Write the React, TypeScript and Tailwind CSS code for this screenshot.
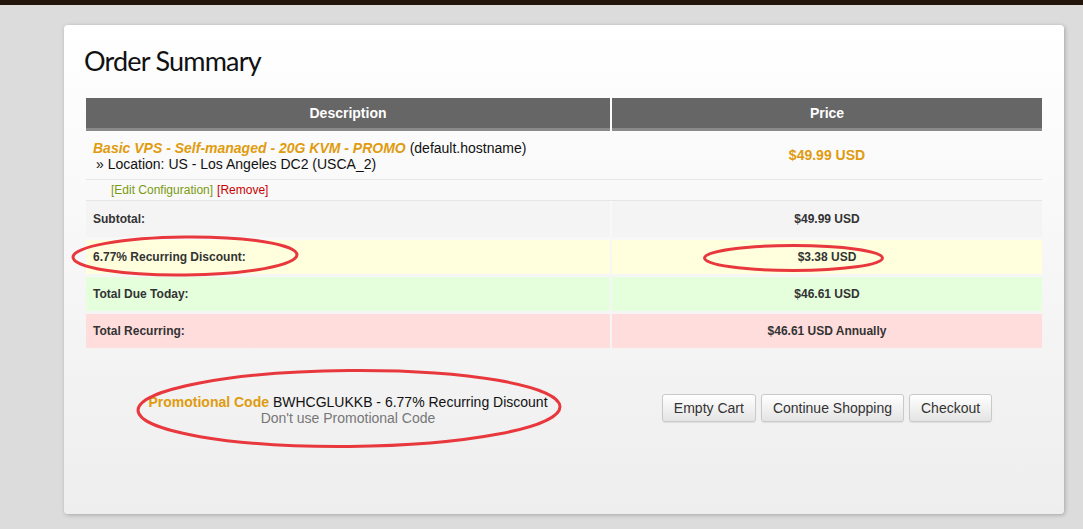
export default function App() {
  const arial = { fontFamily: '"Liberation Sans", Arial, sans-serif' }
  const summary = [
    { label: 'Subtotal:', value: '$49.99 USD', bg: 'bg-[#f4f4f4]', h: 'h-[36px]' },
    { label: '6.77% Recurring Discount:', value: '$3.38 USD', bg: 'bg-[#ffffdd]', h: 'h-[34px]' },
    { label: 'Total Due Today:', value: '$46.61 USD', bg: 'bg-[#e5ffdd]', h: 'h-[34px]' },
    { label: 'Total Recurring:', value: '$46.61 USD Annually', bg: 'bg-[#ffdddd]', h: 'h-[34px]' },
  ]

  return (
    <div className="relative w-[1083px] h-[529px] overflow-hidden bg-[#dcdcdc]" style={arial}>
      <div className="h-[5px] bg-[#231509]" />

      {/* Card */}
      <div className="ml-[64px] mt-[20px] w-[1000px] h-[489px] rounded-[4px] bg-gradient-to-b from-white to-[#eeeeee] shadow-[1px_1px_4px_rgba(0,0,0,0.25)] pt-[19px] px-[22px]">
        <h1
          className="ml-[-2px] text-[27px] leading-[34px] tracking-[-0.8px] text-[#111]"
          style={{ fontFamily: 'Lato, sans-serif' }}
        >
          Order Summary
        </h1>

        {/* Table */}
        <div className="mt-[20px] w-[956px]">
          <div className="grid grid-cols-[524px_430px] gap-x-[2px] text-[14px] font-bold text-white">
            <div className="h-[33px] bg-[#666666] border-b-[3px] border-[#8a8a8a] flex items-center justify-center">Description</div>
            <div className="h-[33px] bg-[#666666] border-b-[3px] border-[#8a8a8a] flex items-center justify-center">Price</div>
          </div>

          <div className="grid grid-cols-[524px_430px] gap-x-[2px] border-b border-[#e6e6e6]">
            <div className="h-[48px] pl-[7px] pt-[9px] text-[14px] leading-[16px] text-[#111]">
              <div>
                <span className="font-bold italic text-[#e09b0e]">Basic VPS - Self-managed - 20G KVM - PROMO</span>{' '}
                (default.hostname)
              </div>
              <div className="pl-[3px]">» Location: US - Los Angeles DC2 (USCA_2)</div>
            </div>
            <div className="h-[48px] flex items-center justify-center text-[14px] font-bold text-[#e09b0e]">$49.99 USD</div>
          </div>

          <div className="grid grid-cols-[524px_430px] gap-x-[2px] border-b border-[#e6e6e6]">
            <div className="h-[20px] pl-[25px] flex items-center text-[12px]">
              <span className="text-[#7a9a10]">[Edit Configuration]</span>
              <span className="ml-[4px] text-[#cc0000]">[Remove]</span>
            </div>
            <div className="h-[20px]" />
          </div>

          <div className="flex flex-col gap-[3px]">
            {summary.map((row) => (
              <div key={row.label} className="grid grid-cols-[524px_430px] gap-x-[2px] text-[12px] font-bold text-[#333]">
                <div className={`${row.h} pl-[7px] flex items-center ${row.bg}`}>{row.label}</div>
                <div className={`${row.h} flex items-center justify-center ${row.bg}`}>{row.value}</div>
              </div>
            ))}
          </div>

          {/* Promo + buttons */}
          <div className="grid grid-cols-[524px_430px] gap-x-[2px] mt-[46px] items-start">
            <div className="text-center text-[14px] leading-[16px]">
              <div>
                <span className="font-bold text-[#e09b0e]">Promotional Code</span>{' '}
                <span className="text-[#111]">BWHCGLUKKB - 6.77% Recurring Discount</span>
              </div>
              <div className="text-[#777]">Don&apos;t use Promotional Code</div>
            </div>
            <div className="flex justify-center gap-[5px]">
              {['Empty Cart', 'Continue Shopping', 'Checkout'].map((b) => (
                <button
                  key={b}
                  className="h-[28px] px-[11px] rounded-[3px] border border-[#c9c9c9] bg-gradient-to-b from-white to-[#e4e4e4] text-[14px] text-[#333] shadow-[0_1px_1px_rgba(0,0,0,0.08)]"
                >
                  {b}
                </button>
              ))}
            </div>
          </div>
        </div>
      </div>

      {/* Red annotation ellipses */}
      <svg className="absolute left-0 top-0 pointer-events-none" width="1083" height="529">
        <ellipse cx="185" cy="256" rx="112" ry="19" fill="none" stroke="#e8383d" strokeWidth="3" transform="rotate(-0.6 185 256)" />
        <ellipse cx="793.5" cy="258" rx="89" ry="12.5" fill="none" stroke="#e8383d" strokeWidth="3" />
        <ellipse cx="349" cy="408.5" rx="211" ry="38" fill="none" stroke="#e8383d" strokeWidth="3" transform="rotate(-0.5 349 408.5)" />
      </svg>
    </div>
  )
}
